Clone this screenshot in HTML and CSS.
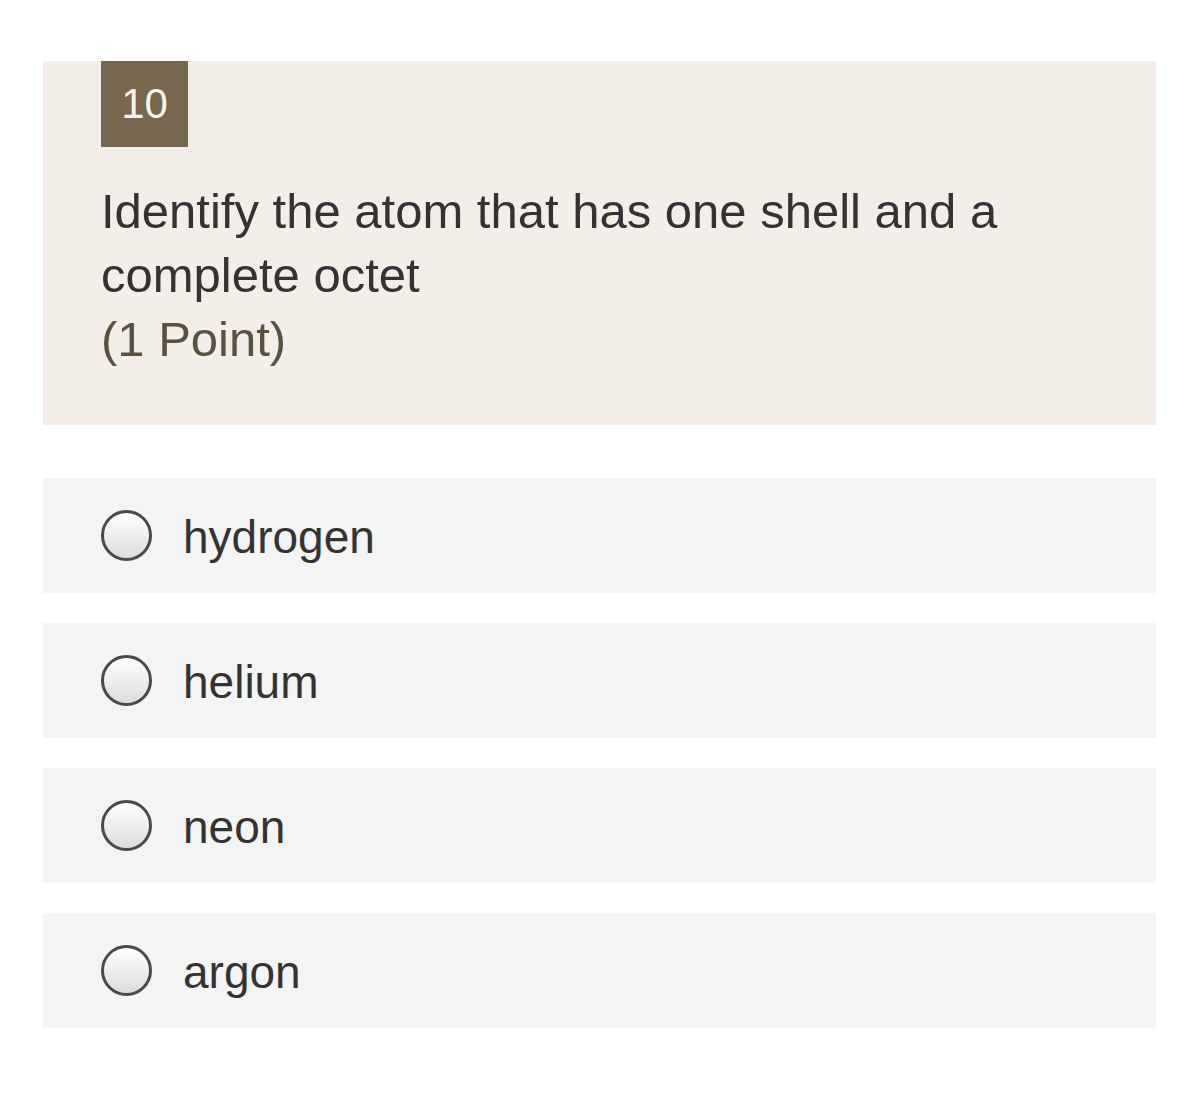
FILE: index.html
```html
<!DOCTYPE html>
<html>
<head>
<meta charset="utf-8">
<link rel="stylesheet" href="styles.css">
</head>
<body>
<div class="page">
  <section class="question">
    <div class="badge">10</div>
    <div class="title">Identify the atom that has one shell and a complete octet<br><span class="points">(1 Point)</span></div>
  </section>
  <div class="options">
    <label class="option"><span class="radio"></span><span class="label">hydrogen</span></label>
    <label class="option"><span class="radio"></span><span class="label">helium</span></label>
    <label class="option"><span class="radio"></span><span class="label">neon</span></label>
    <label class="option"><span class="radio"></span><span class="label">argon</span></label>
  </div>
</div>
</body>
</html>
```
FILE: styles.css
```css
html, body {
  margin: 0;
  padding: 0;
  background: #ffffff;
}
body {
  font-family: "Liberation Sans", Arial, sans-serif;
  color: #333333;
}
.page {
  padding: 61px 44px 0 43px;
}
.question {
  background: #f3eee8;
  padding: 0 60px 54px 58px;
}
.badge {
  width: 87px;
  height: 86px;
  background: #76674e;
  color: #f7f3ec;
  font-size: 42px;
  display: flex;
  align-items: center;
  justify-content: center;
}
.title {
  margin-top: 32px;
  font-size: 49px;
  line-height: 64px;
  color: #333333;
  max-width: 920px;
}
.points {
  color: #5b5140;
}
.options {
  margin-top: 53px;
  display: flex;
  flex-direction: column;
  gap: 30px;
}
.option {
  background: #f4f4f5;
  height: 115px;
  display: flex;
  align-items: center;
  padding-left: 58px;
  gap: 31px;
}
.radio {
  width: 45px;
  height: 45px;
  border: 3px solid #4a4a4a;
  border-radius: 50%;
  background: linear-gradient(#ffffff, #dcdcdc);
  flex: none;
}
.label {
  font-size: 46px;
  color: #333333;
  position: relative;
  top: 1px;
}
```
